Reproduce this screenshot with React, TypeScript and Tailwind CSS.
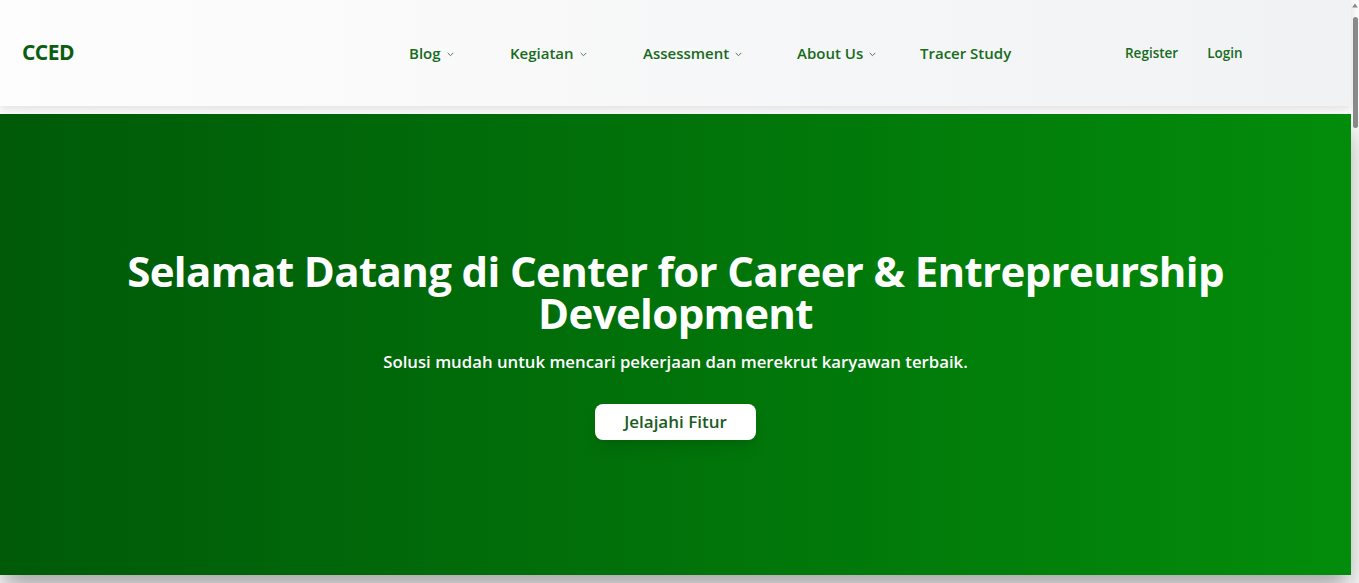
import { type ReactNode } from "react";

const font = { fontFamily: '"Open Sans", "Noto Sans", Arial, sans-serif' };

const Chevron = () => (
  <svg width="7" height="5" viewBox="0 0 7 5" fill="none" className="mt-0.5">
    <path d="M1 1.2 3.5 3.7 6 1.2" stroke="#4a7a4d" strokeWidth="1" strokeLinecap="round" strokeLinejoin="round" />
  </svg>
);

type NavItemProps = {
  children: ReactNode;
  dropdown?: boolean;
};

const NavItem = ({ children, dropdown }: NavItemProps) => (
  <a href="#" className="flex items-center gap-[6px] text-[15px] font-semibold text-[#176b1c] whitespace-nowrap">
    {children}
    {dropdown && <Chevron />}
  </a>
);

const App = () => {
  return (
    <div style={font} className="h-screen flex overflow-hidden bg-white">
      <div className="flex-1 min-w-0">
        {/* ---------- navbar ---------- */}
        <header className="relative z-20 h-[106px] flex items-center pl-[22px] bg-linear-to-r from-[#fdfdfd] to-[#f1f2f4] shadow-[0_3px_8px_rgba(0,0,0,0.12)]">
          <div className="w-[387px] shrink-0">
            <span className="text-[21px] font-bold text-[#0b5d0f] tracking-tight">CCED</span>
          </div>

          <nav className="flex items-center">
            <div className="w-[101px]"><NavItem dropdown>Blog</NavItem></div>
            <div className="w-[133px]"><NavItem dropdown>Kegiatan</NavItem></div>
            <div className="w-[154px]"><NavItem dropdown>Assessment</NavItem></div>
            <div className="w-[123px]"><NavItem dropdown>About Us</NavItem></div>
            <div className="w-[205px]"><NavItem>Tracer Study</NavItem></div>
          </nav>

          <div className="mt-px flex items-center gap-[29px] text-[13.5px] font-semibold text-[#176b1c]">
            <a href="#">Register</a>
            <a href="#">Login</a>
          </div>
        </header>

        {/* ---------- hero ---------- */}
        <section className="relative z-10 mt-2 h-[461px] flex flex-col items-center justify-center text-center bg-linear-to-r from-[#005a08] to-[#038c0b] shadow-[0_16px_24px_-2px_rgba(0,0,0,0.35)]">
          <h1 className="text-[42px] leading-[42px] font-bold text-white max-w-[1120px] tracking-[-0.65px]">
            Selamat Datang di Center for Career &amp; Entrepreurship Development
          </h1>
          <p className="mt-3.5 text-[16.75px] leading-7 font-semibold text-white">
            Solusi mudah untuk mencari pekerjaan dan merekrut karyawan terbaik.
          </p>
          <button className="mt-7 h-9 px-[29px] rounded-lg bg-white text-[17px] font-semibold text-[#1a5c1e] shadow-lg">
            Jelajahi Fitur
          </button>
        </section>

        {/* ---------- next section ---------- */}
        <section className="h-[2320px] bg-white" />
      </div>

      {/* ---------- scrollbar ---------- */}
      <div className="w-2 shrink-0 bg-[#fafafa] flex flex-col items-center">
        <svg width="6" height="5" viewBox="0 0 6 5" className="mt-[3px]">
          <path d="M3 0.5 5.8 4.5H0.2Z" fill="#8a8a8a" />
        </svg>
        <div className="mt-[9px] w-[5px] h-[111px] rounded-full bg-[#8c8c8c]" />
      </div>
    </div>
  );
};

export default App;
